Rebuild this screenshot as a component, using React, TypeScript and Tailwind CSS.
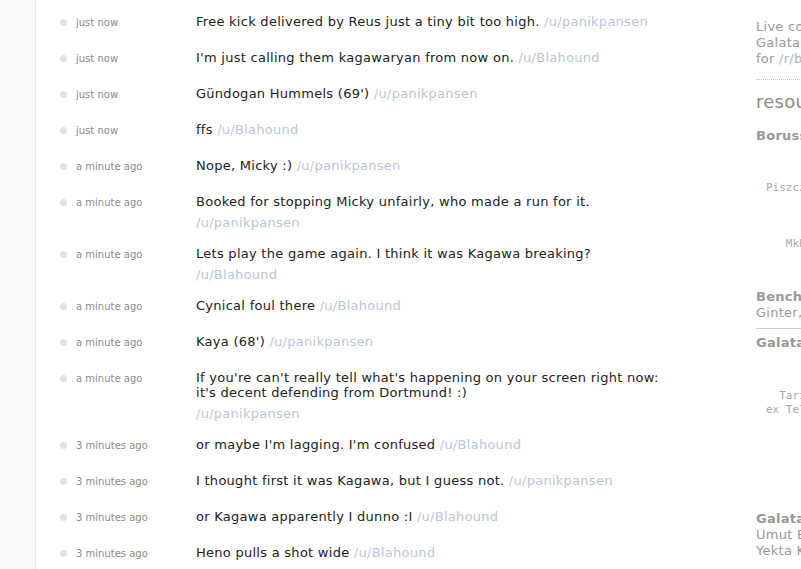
import React from 'react'

const updates = [
  { time: 'just now', body: 'Free kick delivered by Reus just a tiny bit too high.', author: 'panikpansen' },
  { time: 'just now', body: "I'm just calling them kagawaryan from now on.", author: 'Blahound' },
  { time: 'just now', body: "Gündogan Hummels (69')", author: 'panikpansen' },
  { time: 'just now', body: 'ffs', author: 'Blahound' },
  { time: 'a minute ago', body: 'Nope, Micky :)', author: 'panikpansen' },
  { time: 'a minute ago', body: 'Booked for stopping Micky unfairly, who made a run for it.', author: 'panikpansen', wrap: true },
  { time: 'a minute ago', body: 'Lets play the game again. I think it was Kagawa breaking?', author: 'Blahound', wrap: true },
  { time: 'a minute ago', body: 'Cynical foul there', author: 'Blahound' },
  { time: 'a minute ago', body: "Kaya (68')", author: 'panikpansen' },
  { time: 'a minute ago', body: "If you're can't really tell what's happening on your screen right now: it's decent defending from Dortmund! :)", author: 'panikpansen', wrap: true },
  { time: '3 minutes ago', body: "or maybe I'm lagging. I'm confused", author: 'Blahound' },
  { time: '3 minutes ago', body: 'I thought first it was Kagawa, but I guess not.', author: 'panikpansen' },
  { time: '3 minutes ago', body: 'or Kagawa apparently I dunno :I', author: 'Blahound' },
  { time: '3 minutes ago', body: 'Heno pulls a shot wide', author: 'Blahound' },
]

const bvbLineup = [
  '              Weidenfeller',
  '',
  'Piszczek   Subotic   Hummels   Durm',
  '',
  '          Gündogan   Kehl',
  '',
  '   Mkhitaryan   Kagawa   Reus',
  '',
  '             Lewandowski',
]

const galaLineup = [
  '              Muslera',
  '',
  '  Tarik   Kaya   Chedjou   Riera',
  'ex Telles',
  '',
  '        Melo   Selcuk   Inan',
  '',
  '          Sneijder   Bulut',
  '',
  '               Drogba',
]

function Update({ u }: { u: (typeof updates)[number] }) {
  return (
    <div className="flex py-2">
      <div className="flex h-5 w-[136px] shrink-0 items-start">
        <div className="mt-px flex h-[15px] items-center">
          <span className="h-[7px] w-[7px] rounded-full bg-[#e2e2e2]" />
          <span className="ml-[9px] text-[10px] text-[#8a8a8a]">{u.time}</span>
        </div>
      </div>
      <div className="w-[478px] text-[13px] leading-[15px] tracking-[0.27px] text-[#222]">
        {u.body}
        {u.wrap ? (
          <div className="mt-[6px] text-[#b9c6d8]">/u/{u.author}</div>
        ) : (
          <span className="text-[#b9c6d8]"> /u/{u.author}</span>
        )}
      </div>
    </div>
  )
}

const Sidebar = () => (
  <div className="w-[300px] shrink-0 pt-[19px] text-[13px] leading-[16px] tracking-[0.27px] text-[#999]">
    <div>Live coverage of the</div>
    <div>Galatasaray vs Borussia Dortmund</div>
    <div>
      for <span className="text-[#a3b6d0]">/r/borussiadortmund</span>
    </div>
    <div className="mt-[12px] w-[260px] border-t border-dotted border-[#c4c4c4]" />
    <h3 className="mt-[11px] text-[18px] leading-[22px] text-[#8c8c8c]">resources</h3>
    <div className="mt-[15px] font-bold">Borussia Dortmund</div>
    <pre className="mt-[9px] pl-[10px] font-['DejaVu_Sans_Mono',monospace] text-[11px] leading-[14px] tracking-normal text-[#a8a8a8]">
      {bvbLineup.join('\n')}
    </pre>
    <div className="mt-[10px] font-bold">Bench:</div>
    <div>Ginter, Langerak, Sahin, Hofmann</div>
    <div className="mt-[7px] w-[260px] border-t border-[#cfcfcf]" />
    <div className="mt-[6px] font-bold">Galatasaray</div>
    <pre className="mt-[10px] pl-[10px] font-['DejaVu_Sans_Mono',monospace] text-[11px] leading-[14px] tracking-normal text-[#a8a8a8]">
      {galaLineup.join('\n')}
    </pre>
    <div className="mt-[10px] font-bold">Galatasaray Bench:</div>
    <div>Umut Bulut, Engin Baytar,</div>
    <div>Yekta Kurtulus, Nounkeu</div>
  </div>
)

export default function App() {
  return (
    <div className="flex h-screen w-screen overflow-hidden bg-white font-['DejaVu_Sans',Verdana,sans-serif]">
      <div className="w-[36px] shrink-0 border-r border-[#e8e8e8] bg-[#fafafa]" />
      <div className="w-[720px] shrink-0 pt-[6px] pl-[24px]">
        {updates.map((u, i) => (
          <Update key={i} u={u} />
        ))}
      </div>
      <Sidebar />
    </div>
  )
}
